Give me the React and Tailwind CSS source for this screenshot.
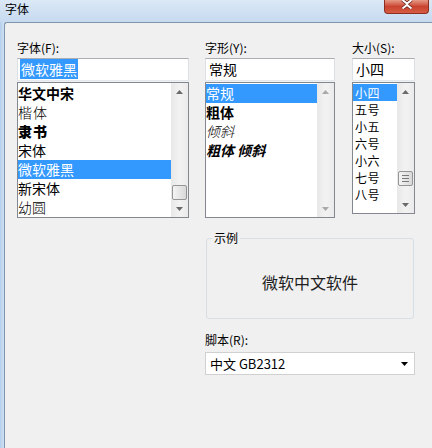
import React from 'react';

const fonts = [
  { name: '华文中宋', cls: 'font-bold' },
  { name: '楷体', cls: 'font-light text-[13px] tracking-[1px]' },
  { name: '隶书', cls: 'font-black text-[12px] tracking-[1px]' },
  { name: '宋体', cls: 'font-normal' },
  { name: '微软雅黑', cls: 'font-normal', selected: true },
  { name: '新宋体', cls: 'font-normal' },
  { name: '幼圆', cls: 'font-light' },
];

const styles = [
  { name: '常规', cls: '', selected: true },
  { name: '粗体', cls: 'font-bold' },
  { name: '倾斜', cls: 'italic font-light text-[13px]' },
  { name: '粗体 倾斜', cls: 'italic font-bold' },
];

const sizes = ['小四', '五号', '小五', '六号', '小六', '七号', '八号'];

const Arrow = ({ down, dim }) => (
  <svg width="7" height="4" viewBox="0 0 7 4" className={dim ? 'fill-[#a9a9a9]' : 'fill-[#6a6a6a]'}>
    <path d={down ? 'M0 0h7L3.5 4z' : 'M0 4h7L3.5 0z'} />
  </svg>
);

// win7 style vertical scrollbar
const ScrollBar = ({ thumb, grip, gap = 0, dim }) => (
  <div className="flex w-[17px] flex-col bg-gradient-to-r from-[#e8e8e8] via-[#f2f2f2] to-[#ebebeb]">
    <div className="flex h-[17px] items-center justify-center">
      <Arrow dim={dim} />
    </div>
    <div className="flex flex-1 flex-col justify-end" style={{ paddingBottom: gap }}>
      {thumb && (
        <div className="mx-auto flex h-[15px] w-[15px] flex-col items-center justify-center gap-[2px] rounded-[2px] border border-[#959595] bg-gradient-to-r from-[#f4f4f4] to-[#d9d9d9]">
          {grip && (
            <>
              <div className="h-px w-[7px] bg-[#7a7a7a]" />
              <div className="h-px w-[7px] bg-[#7a7a7a]" />
              <div className="h-px w-[7px] bg-[#7a7a7a]" />
            </>
          )}
        </div>
      )}
    </div>
    <div className="flex h-[17px] items-center justify-center">
      <Arrow down dim={dim} />
    </div>
  </div>
);

const Label = ({ children }) => (
  <div className="h-[16px] text-[12px] leading-[16px] text-black">{children}</div>
);

const TextBox = ({ children, className = '' }) => (
  <div className={`mt-[2px] h-[23px] border border-[#abadb3] border-x-[#dbdfe6] border-b-[#e3e9ef] bg-white px-[2px] text-[14px] leading-[21px] text-black ${className}`}>
    {children}
  </div>
);

export default function App() {
  return (
    <div className="h-[448px] w-[432px] overflow-hidden bg-[#c4d9ef] font-['Noto_Sans_CJK_SC',sans-serif]">
      {/* title bar */}
      <div className="flex h-[22px] items-start justify-between bg-gradient-to-b from-[#dbe8f6] to-[#c6daf0]">
        <div className="pl-[5px] pt-[1px] text-[12px] leading-[16px] text-black">字体</div>
        <div className="mr-[3px] flex h-[14px] w-[45px] items-start justify-center rounded-b-[4px] border border-t-0 border-[#8c2f22] bg-gradient-to-b from-[#e59a87] via-[#c94330] to-[#d65b42]">
          <svg width="12" height="9" viewBox="0 0 12 9">
            <path d="M1.5 0L6 3.6 10.5 0M1.5 8.5L6 4.9 10.5 8.5" stroke="#5a1a10" strokeWidth="3.4" fill="none" />
            <path d="M1.5 0L6 3.6 10.5 0M1.5 8.5L6 4.9 10.5 8.5" stroke="#ffffff" strokeWidth="2" fill="none" />
          </svg>
        </div>
      </div>

      <div className="flex h-[426px]">
        <div className="w-[4px] bg-gradient-to-r from-[#b4cfeb] to-[#cfe1f4]" />
        <div className="flex-1 rounded-tl-[3px] border-l border-t border-[#7f95ad] bg-[#f0f0f0] pl-[12px] pt-[17px]">
          <div className="flex">
            {/* font family */}
            <div className="w-[172px]">
              <Label>字体(F):</Label>
              <TextBox>
                <span className="bg-[#3399ff] px-[1px] text-white">微软雅黑</span>
              </TextBox>
              <div className="mt-px flex h-[136px] border border-[#828790] bg-white">
                <div className="flex-1 pt-px">
                  {fonts.map((f) => (
                    <div
                      key={f.name}
                      className={`h-[19px] text-[14px] leading-[19px] ${f.cls} ${f.selected ? 'bg-[#3399ff] text-white' : 'text-black'}`}
                    >
                      {f.name}
                    </div>
                  ))}
                </div>
                <ScrollBar thumb />
              </div>
            </div>

            {/* font style */}
            <div className="ml-[16px] w-[130px]">
              <Label>字形(Y):</Label>
              <TextBox className="pl-[3px]">常规</TextBox>
              <div className="mt-px flex h-[136px] border border-[#828790] bg-white">
                <div className="flex-1 pt-px">
                  {styles.map((s) => (
                    <div
                      key={s.name}
                      className={`h-[19px] text-[14px] leading-[19px] ${s.cls} ${s.selected ? 'bg-[#3399ff] text-white' : 'text-black'}`}
                    >
                      {s.name}
                    </div>
                  ))}
                </div>
                <ScrollBar dim />
              </div>
            </div>

            {/* size */}
            <div className="ml-[17px] w-[63px]">
              <Label>大小(S):</Label>
              <TextBox className="pl-[3px]">小四</TextBox>
              <div className="mt-px flex h-[132px] border border-[#828790] bg-white">
                <div className="flex-1 pt-px">
                  {sizes.map((s, i) => (
                    <div
                      key={s}
                      className={`h-[17px] overflow-hidden pl-[2px] text-[12px] leading-[17px] tracking-[0.5px] ${i === 0 ? 'bg-[#3399ff] text-white' : 'text-black'}`}
                    >
                      {s}
                    </div>
                  ))}
                </div>
                <ScrollBar thumb grip gap={10} />
              </div>
            </div>
          </div>

          {/* sample + script */}
          <div className="ml-[188px] w-[210px]">
            <fieldset className="mx-px mt-[14px] h-[87px] rounded-[3px] border border-[#d5dfe5]">
              <legend className="ml-[5px] px-[2px] text-[12px] leading-[12px] text-black">示例</legend>
              <div className="flex h-[70px] items-center justify-center pt-[6px] text-[16px] leading-[20px] text-[#1e1e1e]">
                微软中文软件
              </div>
            </fieldset>
            <div className="mt-[13px]">
              <Label>脚本(R):</Label>
              <div className="mt-[4px] flex h-[23px] items-center justify-between border border-[#d0d0d0] bg-white pl-[4px] pr-[6px] text-[13px] leading-[21px] text-black">
                <span>中文 GB2312</span>
                <svg width="7" height="4" viewBox="0 0 7 4" className="fill-black">
                  <path d="M0 0h7L3.5 4z" />
                </svg>
              </div>
            </div>
          </div>
        </div>
      </div>
    </div>
  );
}
